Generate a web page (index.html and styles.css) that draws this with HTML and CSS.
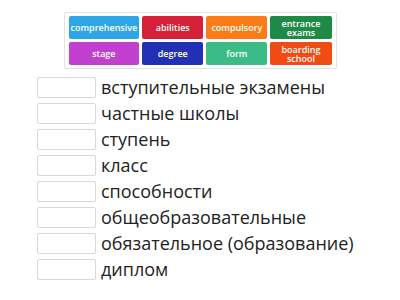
FILE: index.html
```html
<!DOCTYPE html>
<html lang="en">
<head>
    <meta charset="UTF-8">
    <title>Match up</title>
    <link rel="stylesheet" href="styles.css">
</head>
<body>

    <div class="bank">
        <div class="tile blue">comprehensive</div>
        <div class="tile red">abilities</div>
        <div class="tile orange">compulsory</div>
        <div class="tile green">entrance exams</div>
        <div class="tile purple">stage</div>
        <div class="tile navy">degree</div>
        <div class="tile teal">form</div>
        <div class="tile rust">boarding school</div>
    </div>

    <div class="rows">
        <div class="row"><span class="slot"></span><span class="label">вступительные экзамены</span></div>
        <div class="row"><span class="slot"></span><span class="label">частные школы</span></div>
        <div class="row"><span class="slot"></span><span class="label">ступень</span></div>
        <div class="row"><span class="slot"></span><span class="label">класс</span></div>
        <div class="row"><span class="slot"></span><span class="label">способности</span></div>
        <div class="row"><span class="slot"></span><span class="label">общеобразовательные</span></div>
        <div class="row"><span class="slot"></span><span class="label">обязательное (образование)</span></div>
        <div class="row"><span class="slot"></span><span class="label">диплом</span></div>
    </div>

</body>
</html>
```

FILE: styles.css
```css
/* Basic reset */
* {
    margin: 0;
    padding: 0;
    box-sizing: border-box;
}

body {
    font-family: "Open Sans", sans-serif;
    background-color: #fff;
    color: #222;
    width: 400px;
    height: 300px;
    overflow: hidden;
}

/* Word bank at the top */
.bank {
    width: 273px;
    margin: 12px auto 0;
    padding: 3px 4px;
    border: 1px solid #e2e2e2;
    border-radius: 2px;
    display: grid;
    grid-template-columns: repeat(4, 1fr);
    gap: 3px;
}

.tile {
    height: 23px;
    border-radius: 2px;
    color: #fff;
    font-size: 9px;
    font-weight: 600;
    line-height: 9px;
    text-align: center;
    display: flex;
    align-items: center;
    justify-content: center;
    padding: 0 2px;
}

.blue { background-color: #2ea6e6; }
.red { background-color: #d42038; }
.orange { background-color: #fb7b16; }
.green { background-color: #1f8a45; }
.purple { background-color: #c23fcf; }
.navy { background-color: #2230b5; }
.teal { background-color: #3bbc86; }
.rust { background-color: #ef4b12; }

/* Answer rows */
.rows {
    margin-top: 8px;
    padding-left: 37px;
    display: flex;
    flex-direction: column;
    gap: 5px;
}

.row {
    display: flex;
    align-items: center;
    height: 21px;
}

.slot {
    width: 59px;
    height: 21px;
    border: 1px solid #d8d8d8;
    border-radius: 2px;
    margin-right: 5px;
}

.label {
    font-size: 18px;
    line-height: 21px;
}
```
